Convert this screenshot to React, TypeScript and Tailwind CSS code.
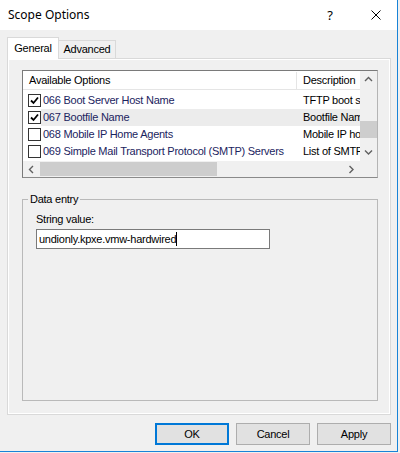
import React from "react";

type Row = { code: string; name: string; desc: string; checked: boolean; hover?: boolean };

const rows: Row[] = [
  { code: "066", name: "Boot Server Host Name", desc: "TFTP boot server host name", checked: true },
  { code: "067", name: "Bootfile Name", desc: "Bootfile Name", checked: true, hover: true },
  { code: "068", name: "Mobile IP Home Agents", desc: "Mobile IP home agents in priority order", checked: false },
  { code: "069", name: "Simple Mail Transport Protocol (SMTP) Servers", desc: "List of SMTP servers available", checked: false },
];

function Chevron({ dir }: { dir: "up" | "down" | "left" | "right" }) {
  // small scrollbar arrow
  const d = {
    up: "M1 5 L4.5 1.5 L8 5",
    down: "M1 1.5 L4.5 5 L8 1.5",
    left: "M5 1 L1.5 4.5 L5 8",
    right: "M1.5 1 L5 4.5 L1.5 8",
  }[dir];
  const vertical = dir === "up" || dir === "down";
  return (
    <svg width={vertical ? 9 : 7} height={vertical ? 7 : 9} viewBox={vertical ? "0 0 9 7" : "0 0 7 9"}>
      <path d={d} fill="none" stroke="#606060" strokeWidth="1.4" />
    </svg>
  );
}

function CheckBox({ checked }: { checked: boolean }) {
  return (
    <div className="w-[13px] h-[13px] border border-[#333333] bg-white flex items-center justify-center">
      {checked && (
        <svg width="9" height="9" viewBox="0 0 9 9">
          <path d="M1 4.5 L3.5 7 L8 1.5" fill="none" stroke="#000" strokeWidth="1.8" />
        </svg>
      )}
    </div>
  );
}

function Button({ label, primary }: { label: string; primary?: boolean }) {
  return (
    <div
      className={
        primary
          ? "w-[74px] h-[22px] bg-[#e1e1e1] border-2 border-[#0078d7] flex items-center justify-center"
          : "w-[74px] h-[22px] bg-[#e1e1e1] border border-[#adadad] flex items-center justify-center"
      }
    >
      {label}
    </div>
  );
}

export default function App() {
  return (
    <div className="w-[400px] h-[453px] bg-[#f0f0f0]">
      <div className="w-[398px] h-[452px] bg-[#f0f0f0] border-r border-b border-[#1883d7] flex flex-col font-['Liberation_Sans',Arial,sans-serif] text-[11px] tracking-[-0.25px] text-black">
        {/* Title bar */}
        <div className="h-[30px] bg-white flex items-center pl-[8px] pr-[16px] shrink-0 tracking-normal">
          <span className="font-['Noto_Sans','Open_Sans',sans-serif] text-[12px] text-black">Scope Options</span>
          <span className="ml-auto font-['Noto_Sans','Open_Sans',sans-serif] text-[13px] leading-none">?</span>
          <svg className="ml-[38px]" width="10" height="10" viewBox="0 0 10 10">
            <path d="M0.5 0.5 L9.5 9.5 M9.5 0.5 L0.5 9.5" stroke="#000" strokeWidth="1" />
          </svg>
        </div>

        <div className="flex-1 pt-[7px] pl-[7px] pr-[6px]">
          {/* Tabs */}
          <div className="relative z-10 flex items-end h-[22px] -mb-px">
            <div className="w-[52px] h-[22px] bg-white border-x border-t border-[#d9d9d9] flex items-center justify-center pb-[1px]">
              General
            </div>
            <div className="w-[57px] h-[19px] bg-[#f0f0f0] border-t border-r border-b border-[#d9d9d9] flex items-center justify-center">
              Advanced
            </div>
          </div>

          {/* Tab page */}
          <div className="h-[357px] border border-[#d9d9d9] shadow-[inset_1px_1px_0_#ffffff,inset_-1px_-1px_0_#ffffff] pt-[11px] pl-[14px]">
            {/* Options list */}
            <div className="w-[356px] h-[108px] border border-l-[#7a7a7a] border-t-[#7a7a7a] border-b-[#8a8a8a] border-r-[#b4b4b4] bg-white flex flex-col">
              <div className="flex h-[90px]">
                <div className="w-[337px] overflow-hidden">
                  <div className="h-[19px] flex border-b border-[#e5e5e5] whitespace-nowrap pt-[1px]">
                    <div className="w-[274px] pl-[6px] border-r border-[#e5e5e5] flex items-center">Available Options</div>
                    <div className="pl-[6px] flex items-center">Description</div>
                  </div>
                  <div className="pt-[2px]">
                    {rows.map((r) => (
                      <div key={r.code} className="h-[17px] flex items-center whitespace-nowrap">
                        <div className="w-[18px] pl-[5px] flex items-center">
                          <CheckBox checked={r.checked} />
                        </div>
                        <div className={r.hover ? "flex-1 h-full flex items-center bg-[#ececec]" : "flex-1 h-full flex items-center"}>
                          <div className="w-[256px] pl-[2px] text-[#1b2460]">
                            {r.code} {r.name}
                          </div>
                          <div className="w-[63px] pl-[6px] overflow-hidden">{r.desc}</div>
                        </div>
                      </div>
                    ))}
                  </div>
                </div>
                {/* Vertical scrollbar */}
                <div className="w-[17px] bg-[#f0f0f0] flex flex-col">
                  <div className="h-[17px] flex items-center justify-center">
                    <Chevron dir="up" />
                  </div>
                  <div className="flex-1 pt-[33px]">
                    <div className="h-[17px] bg-[#cdcdcd]" />
                  </div>
                  <div className="h-[17px] flex items-center justify-center">
                    <Chevron dir="down" />
                  </div>
                </div>
              </div>
              {/* Horizontal scrollbar */}
              <div className="flex h-[16px] bg-[#f0f0f0]">
                <div className="w-[17px] flex items-center justify-center">
                  <Chevron dir="left" />
                </div>
                <div className="flex-1 py-[1px]">
                  <div className="w-[177px] h-full bg-[#cdcdcd]" />
                </div>
                <div className="w-[17px] flex items-center justify-center">
                  <Chevron dir="right" />
                </div>
                <div className="w-[17px]" />
              </div>
            </div>

            {/* Data entry group */}
            <fieldset className="mt-[14px] w-[356px] h-[209px] border border-[#b9b9b9]">
              <legend className="ml-[5px] px-[2px] leading-[14px]">Data entry</legend>
              <div className="pl-[13px]">
                <div className="pt-[6px] leading-[14px]">String value:</div>
                <div className="mt-[3px] w-[234px] h-[20px] border border-[#7a7a7a] bg-white flex items-center pl-[2px]">
                  <span>undionly.kpxe.vmw-hardwired</span>
                  <span className="w-px h-[14px] bg-black" />
                </div>
              </div>
            </fieldset>
          </div>

          {/* Buttons */}
          <div className="flex justify-end gap-[7px] mt-[8px]">
            <Button label="OK" primary />
            <Button label="Cancel" />
            <Button label="Apply" />
          </div>
        </div>
      </div>
    </div>
  );
}
